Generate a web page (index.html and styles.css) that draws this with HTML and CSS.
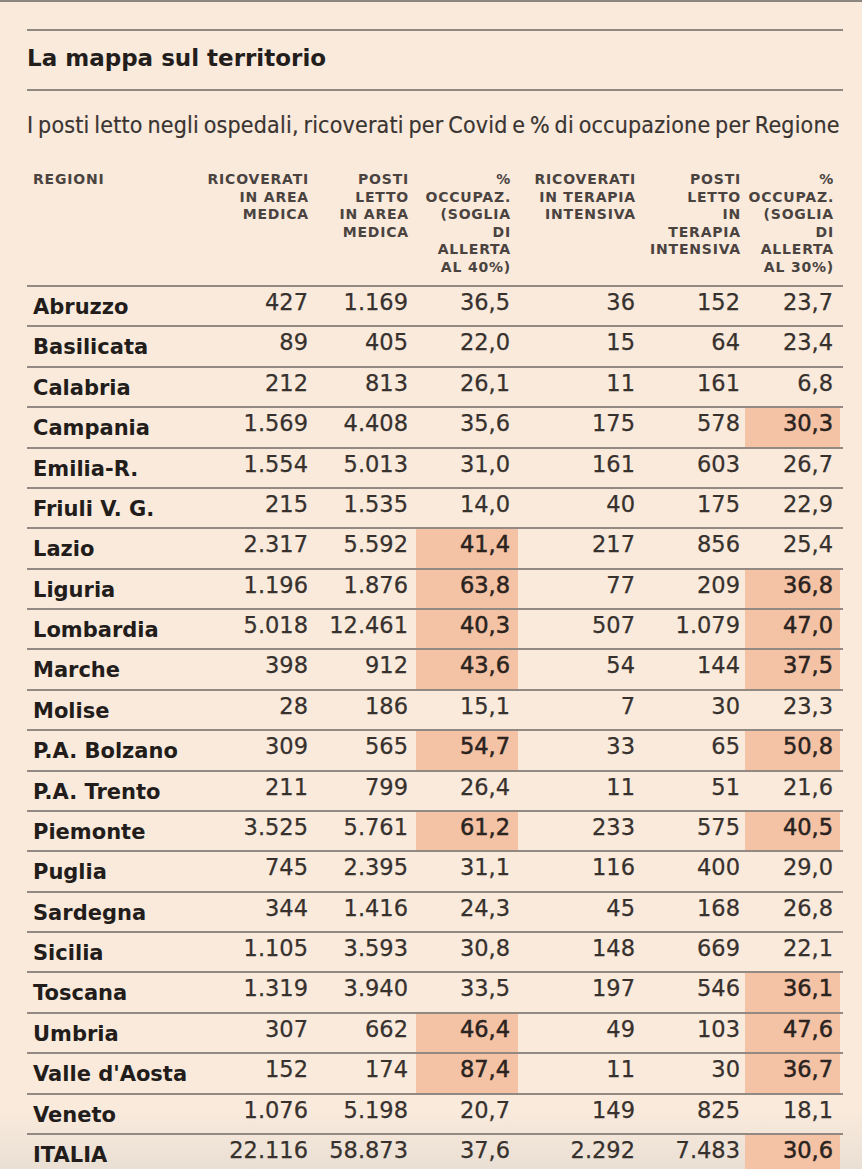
FILE: index.html
```html
<!DOCTYPE html>
<html lang="it">
<head>
<meta charset="utf-8">
<title>La mappa sul territorio</title>
<link rel="stylesheet" href="styles.css">
</head>
<body>
<div class="page">
  <div class="rule rule-first"></div>
  <h1 class="title">La mappa sul territorio</h1>
  <div class="rule rule-second"></div>
  <p class="subtitle">I posti letto negli ospedali, ricoverati per Covid e % di occupazione per Regione</p>

  <div class="table">
    <div class="head">
      <div class="h h-name">REGIONI</div>
      <div class="h">RICOVERATI<br>IN AREA<br>MEDICA</div>
      <div class="h">POSTI<br>LETTO<br>IN AREA<br>MEDICA</div>
      <div class="h">%<br>OCCUPAZ.<br>(SOGLIA<br>DI<br>ALLERTA<br>AL 40%)</div>
      <div class="h">RICOVERATI<br>IN TERAPIA<br>INTENSIVA</div>
      <div class="h h-5">POSTI<br>LETTO<br>IN<br>TERAPIA<br>INTENSIVA</div>
      <div class="h h-6">%<br>OCCUPAZ.<br>(SOGLIA<br>DI<br>ALLERTA<br>AL 30%)</div>
    </div>

    <div class="row"><div class="name">Abruzzo</div><div class="c">427</div><div class="c">1.169</div><div class="c">36,5</div><div class="c">36</div><div class="c c5">152</div><div class="c c6">23,7</div></div>
    <div class="row"><div class="name">Basilicata</div><div class="c">89</div><div class="c">405</div><div class="c">22,0</div><div class="c">15</div><div class="c c5">64</div><div class="c c6">23,4</div></div>
    <div class="row"><div class="name">Calabria</div><div class="c">212</div><div class="c">813</div><div class="c">26,1</div><div class="c">11</div><div class="c c5">161</div><div class="c c6">6,8</div></div>
    <div class="row"><div class="name">Campania</div><div class="c">1.569</div><div class="c">4.408</div><div class="c">35,6</div><div class="c">175</div><div class="c c5">578</div><div class="c c6 hot">30,3</div></div>
    <div class="row"><div class="name">Emilia-R.</div><div class="c">1.554</div><div class="c">5.013</div><div class="c">31,0</div><div class="c">161</div><div class="c c5">603</div><div class="c c6">26,7</div></div>
    <div class="row"><div class="name">Friuli V. G.</div><div class="c">215</div><div class="c">1.535</div><div class="c">14,0</div><div class="c">40</div><div class="c c5">175</div><div class="c c6">22,9</div></div>
    <div class="row"><div class="name">Lazio</div><div class="c">2.317</div><div class="c">5.592</div><div class="c hot">41,4</div><div class="c">217</div><div class="c c5">856</div><div class="c c6">25,4</div></div>
    <div class="row"><div class="name">Liguria</div><div class="c">1.196</div><div class="c">1.876</div><div class="c hot">63,8</div><div class="c">77</div><div class="c c5">209</div><div class="c c6 hot">36,8</div></div>
    <div class="row"><div class="name">Lombardia</div><div class="c">5.018</div><div class="c">12.461</div><div class="c hot">40,3</div><div class="c">507</div><div class="c c5">1.079</div><div class="c c6 hot">47,0</div></div>
    <div class="row"><div class="name">Marche</div><div class="c">398</div><div class="c">912</div><div class="c hot">43,6</div><div class="c">54</div><div class="c c5">144</div><div class="c c6 hot">37,5</div></div>
    <div class="row"><div class="name">Molise</div><div class="c">28</div><div class="c">186</div><div class="c">15,1</div><div class="c">7</div><div class="c c5">30</div><div class="c c6">23,3</div></div>
    <div class="row"><div class="name">P.A. Bolzano</div><div class="c">309</div><div class="c">565</div><div class="c hot">54,7</div><div class="c">33</div><div class="c c5">65</div><div class="c c6 hot">50,8</div></div>
    <div class="row"><div class="name">P.A. Trento</div><div class="c">211</div><div class="c">799</div><div class="c">26,4</div><div class="c">11</div><div class="c c5">51</div><div class="c c6">21,6</div></div>
    <div class="row"><div class="name">Piemonte</div><div class="c">3.525</div><div class="c">5.761</div><div class="c hot">61,2</div><div class="c">233</div><div class="c c5">575</div><div class="c c6 hot">40,5</div></div>
    <div class="row"><div class="name">Puglia</div><div class="c">745</div><div class="c">2.395</div><div class="c">31,1</div><div class="c">116</div><div class="c c5">400</div><div class="c c6">29,0</div></div>
    <div class="row"><div class="name">Sardegna</div><div class="c">344</div><div class="c">1.416</div><div class="c">24,3</div><div class="c">45</div><div class="c c5">168</div><div class="c c6">26,8</div></div>
    <div class="row"><div class="name">Sicilia</div><div class="c">1.105</div><div class="c">3.593</div><div class="c">30,8</div><div class="c">148</div><div class="c c5">669</div><div class="c c6">22,1</div></div>
    <div class="row"><div class="name">Toscana</div><div class="c">1.319</div><div class="c">3.940</div><div class="c">33,5</div><div class="c">197</div><div class="c c5">546</div><div class="c c6 hot">36,1</div></div>
    <div class="row"><div class="name">Umbria</div><div class="c">307</div><div class="c">662</div><div class="c hot">46,4</div><div class="c">49</div><div class="c c5">103</div><div class="c c6 hot">47,6</div></div>
    <div class="row"><div class="name">Valle d'Aosta</div><div class="c">152</div><div class="c">174</div><div class="c hot">87,4</div><div class="c">11</div><div class="c c5">30</div><div class="c c6 hot">36,7</div></div>
    <div class="row"><div class="name">Veneto</div><div class="c">1.076</div><div class="c">5.198</div><div class="c">20,7</div><div class="c">149</div><div class="c c5">825</div><div class="c c6">18,1</div></div>
    <div class="row row-total"><div class="name">ITALIA</div><div class="c">22.116</div><div class="c">58.873</div><div class="c">37,6</div><div class="c">2.292</div><div class="c c5">7.483</div><div class="c c6 hot">30,6</div></div>
  </div>
</div>
</body>
</html>
```

FILE: styles.css
```css
html {
  overflow: hidden;
  background: linear-gradient(to bottom, #f9eadc 0, #f9eadc 1110px, #eadfd4 1169px);
}

body {
  margin: 0;
  height: 1169px;
  border-top: 2px solid #8b8680;
  box-sizing: border-box;
  color: #2a2421;
  font-family: "DejaVu Sans", "Liberation Sans", sans-serif;
}

.page {
  padding: 27px 19px 0 27px;
}

.rule {
  height: 2px;
  background: #8f8881;
  width: 816px;
}

.title {
  margin: 13px 0 0 0;
  font-size: 23px;
  line-height: 28px;
  font-weight: bold;
  color: #231e1c;
}

.rule-second {
  margin-top: 17px;
}

.subtitle {
  margin: 21px 0 0 0;
  font-family: "DejaVu Sans Condensed", "DejaVu Sans", sans-serif;
  font-stretch: condensed;
  font-size: 23px;
  line-height: 26px;
  letter-spacing: 0.2px;
  word-spacing: -2px;
  color: #3a3431;
  white-space: nowrap;
  -webkit-text-stroke: 0.2px #3a3431;
}

.table {
  margin-top: 33px;
  width: 816px;
}

.head,
.row {
  display: grid;
  grid-template-columns: 177px 112px 100px 102px 125px 102px 95px 3px;
}

.head {
  padding-bottom: 9px;
}

.h {
  font-size: 14px;
  line-height: 17.5px;
  font-weight: bold;
  letter-spacing: 0.8px;
  color: #4a4340;
  text-align: right;
  padding-right: 7px;
  white-space: nowrap;
}

.h-5 {
  padding-right: 4px;
}

.h-6 {
  padding-right: 6px;
}

.h-name {
  text-align: left;
  padding-left: 6px;
  padding-right: 0;
}

.row {
  height: 40.38px;
  box-sizing: border-box;
  border-top: 2px solid #928a82;
}

.name {
  padding: 8px 0 0 6px;
  font-size: 21px;
  line-height: 24px;
  font-weight: bold;
  color: #221d1b;
  white-space: nowrap;
}

.c {
  padding: 3px 8px 0 0;
  font-size: 22.5px;
  line-height: 24px;
  text-align: right;
  color: #37312e;
  white-space: nowrap;
  -webkit-text-stroke: 0.25px #37312e;
}

.c5 {
  padding-right: 5px;
}

.c6 {
  padding-right: 7px;
}

.hot {
  background: #f4c2a4;
  color: #2a2320;
  -webkit-text-stroke: 0.5px #2a2320;
}
```
